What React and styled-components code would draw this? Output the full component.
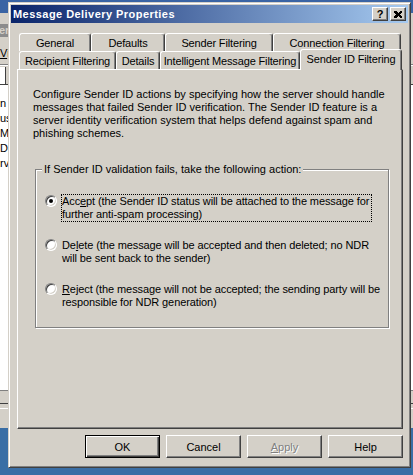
import React from 'react'
import styled, { createGlobalStyle } from 'styled-components'

const FACE = '#d4d0c8'
const SHADOW = '#808080'
const DARK = '#404040'
const FONT = `"Liberation Sans", Arial, sans-serif`

const Global = createGlobalStyle`
  html, body { margin:0; padding:0; background:#3a6ea5; overflow:hidden; }
  body { font-family:${FONT}; font-size:11px; color:#000; }
`

const Desktop = styled.div`
  position:relative;
  width:413px;
  height:475px;
  overflow:hidden;
  background:#3a6ea5;
`

/* window behind the dialog, only its edges show */
const BackWindow = styled.div`
  position:absolute;
  left:-6px;
  top:-6px;
  width:430px;
  height:434px;
  background:${FACE};
  display:flex;
  flex-direction:column;
`
const BackTitle = styled.div`
  height:19px;
  background:#3a64a4;
  flex:none;
`
const ChildTitle = styled.div`
  margin-top:11px;
  height:13px;
  width:20px;
  overflow:hidden;
  background:#8c8c8c;
  color:${FACE};
  font-weight:bold;
  line-height:13px;
  padding-left:5px;
  flex:none;
`
const BackMenu = styled.div`
  margin-top:5px;
  height:22px;
  line-height:22px;
  padding-left:6px;
  border-bottom:1px solid ${SHADOW};
  box-shadow:0 1px #fff;
  flex:none;
`
const BackToolbar = styled.div`
  height:17px;
  margin-top:2px;
  border-bottom:1px solid ${DARK};
  flex:none;
  display:flex;
  span{
    width:11px;
    border-right:1px solid ${DARK};
    background:#fff;
  }
`
const BackList = styled.div`
  flex:1;
  background:#fff;
  padding:11px 0 0 6px;
  div{
    width:14px;
    overflow:hidden;
    line-height:15px;
    white-space:nowrap;
  }
`
const BackStatus = styled.div`
  height:38px;
  flex:none;
  border-top:1px solid ${SHADOW};
  display:flex;
  flex-direction:column;
  gap:4px;
  padding-top:12px;
  box-sizing:border-box;
  span{ height:1px; background:${DARK}; }
  span + span{ background:#fff; }
`

const Dialog = styled.div`
  position:absolute;
  left:8px;
  top:2px;
  width:403px;
  height:466px;
  box-sizing:border-box;
  background:${FACE};
  border:1px solid;
  border-color:${FACE} ${DARK} ${DARK} ${FACE};
  box-shadow:inset 1px 1px #fff, inset -1px -1px ${SHADOW};
  padding:2px;
  display:flex;
  flex-direction:column;
`
const TitleBar = styled.div`
  height:18px;
  flex:none;
  display:flex;
  align-items:center;
  padding:0 2px;
  background:linear-gradient(to right, #0a246a, #a6caf0);
  color:#fff;
  font-weight:bold;
  letter-spacing:0.45px;
`
const CaptionButtons = styled.div`
  margin-left:auto;
  display:flex;
  gap:2px;
`
const CaptionButton = styled.div`
  width:16px;
  height:14px;
  box-sizing:border-box;
  background:${FACE};
  border:1px solid;
  border-color:#fff ${DARK} ${DARK} #fff;
  box-shadow:inset -1px -1px ${SHADOW};
  display:flex;
  align-items:center;
  justify-content:center;
  color:#000;
  font-weight:bold;
  font-size:11px;
  letter-spacing:0;
  line-height:12px;
`

const Body = styled.div`
  padding:10px 5px 0 6px;
  display:flex;
  flex-direction:column;
`
const TabRow = styled.div`
  display:flex;
  align-items:flex-start;
  margin-left:2px;
  height:18px;
`
const Tab = styled.div`
  box-sizing:border-box;
  width:${p => p.$w}px;
  height:${p => (p.$sel ? 21 : 18)}px;
  ${p => p.$sel && 'margin-top:-2px; margin-bottom:-1px; position:relative; z-index:1;'}
  background:${FACE};
  border-top:1px solid #fff;
  border-left:1px solid #fff;
  border-right:1px solid ${DARK};
  border-radius:3px 3px 0 0;
  box-shadow:inset -1px 0 ${SHADOW};
  text-align:center;
  padding-top:3px;
  line-height:13px;
  letter-spacing:-0.15px;
  white-space:nowrap;
`
const Panel = styled.div`
  box-sizing:border-box;
  height:360px;
  border:1px solid;
  border-color:#fff ${DARK} ${DARK} #fff;
  box-shadow:inset -1px -1px ${SHADOW};
  padding:18px 15px 0 15px;
`
const Intro = styled.p`
  margin:0;
  line-height:13px;
  white-space:nowrap;
`
const GroupBox = styled.fieldset`
  box-sizing:border-box;
  width:354px;
  min-width:0;
  margin:23px 0 0 2px;
  padding:0 0 17px 0;
  border:1px solid ${SHADOW};
  box-shadow:1px 1px 0 #fff, inset 1px 1px 0 #fff;
`
const Legend = styled.legend`
  margin-left:6px;
  padding:0 2px;
  line-height:13px;
  background:${FACE};
`
const Options = styled.div`
  margin-top:18px;
  display:flex;
  flex-direction:column;
  gap:16px;
`
const OptionRow = styled.div`
  display:flex;
  align-items:flex-start;
  padding-left:9px;
`
const Radio = styled.span`
  width:12px;
  height:12px;
  margin-top:1px;
  flex:none;
  box-sizing:border-box;
  border-radius:50%;
  border:1px solid;
  border-color:${SHADOW} #fff #fff ${SHADOW};
  box-shadow:inset 1px 1px ${DARK}, inset -1px -1px ${FACE};
  background:#fff;
  display:flex;
  align-items:center;
  justify-content:center;
  &::after{
    content:'';
    width:4px;
    height:4px;
    border-radius:50%;
    background:${p => (p.$on ? '#000' : 'transparent')};
  }
`
const OptionLabel = styled.span`
  margin-left:4px;
  border:1px dotted ${p => (p.$focus ? '#000' : 'transparent')};
  padding-right:2px;
  line-height:13px;
  letter-spacing:-0.1px;
  white-space:nowrap;
`

const ButtonRow = styled.div`
  margin-top:6px;
  display:flex;
  justify-content:flex-end;
  gap:6px;
`
const Button = styled.button`
  width:75px;
  height:23px;
  box-sizing:border-box;
  padding:0;
  background:${FACE};
  font-family:${FONT};
  font-size:11px;
  color:${p => (p.disabled ? SHADOW : '#000')};
  text-shadow:${p => (p.disabled ? '1px 1px #fff' : 'none')};
  border:1px solid;
  border-color:${p => (p.$default ? '#000' : `#fff ${DARK} ${DARK} #fff`)};
  box-shadow:${p =>
    p.$default
      ? `inset 1px 1px #fff, inset -1px -1px ${DARK}, inset -2px -2px ${SHADOW}`
      : `inset -1px -1px ${SHADOW}`};
`

const CloseGlyph = () => (
  <svg width="8" height="7" viewBox="0 0 8 7" shapeRendering="crispEdges">
    <path d="M0 0h2l2 2 2-2h2v1L6 3.5 8 6v1H6L4 5 2 7H0V6l2-2.5L0 1z" fill="#000" />
  </svg>
)

const backTabs = [
  { label: 'General', w: 72 },
  { label: 'Defaults', w: 74 },
  { label: 'Sender Filtering', w: 108 },
  { label: 'Connection Filtering', w: 128 },
]
const frontTabs = [
  { label: 'Recipient Filtering', w: 97 },
  { label: 'Details', w: 44 },
  { label: 'Intelligent Message Filtering', w: 140 },
  { label: 'Sender ID Filtering', w: 102, sel: true },
]

const options = [
  {
    key: 'accept',
    on: true,
    first: <>Acc<u>e</u>pt (the Sender ID status will be attached to the message for</>,
    second: 'further anti-spam processing)',
  },
  {
    key: 'delete',
    first: <>De<u>l</u>ete (the message will be accepted and then deleted; no NDR</>,
    second: 'will be sent back to the sender)',
  },
  {
    key: 'reject',
    first: <><u>R</u>eject (the message will not be accepted; the sending party will be</>,
    second: 'responsible for NDR generation)',
  },
]

export default function App() {
  return (
    <Desktop>
      <Global />
      <BackWindow>
        <BackTitle />
        <ChildTitle>ers</ChildTitle>
        <BackMenu><u>V</u>i</BackMenu>
        <BackToolbar><span /></BackToolbar>
        <BackList>
          <div>n (</div>
          <div>us</div>
          <div>Me</div>
          <div>Di</div>
          <div>rv</div>
        </BackList>
        <BackStatus><span /><span /></BackStatus>
      </BackWindow>

      <Dialog>
        <TitleBar>
          Message Delivery Properties
          <CaptionButtons>
            <CaptionButton>?</CaptionButton>
            <CaptionButton><CloseGlyph /></CaptionButton>
          </CaptionButtons>
        </TitleBar>
        <Body>
          <TabRow>
            {backTabs.map(t => (
              <Tab key={t.label} $w={t.w}>{t.label}</Tab>
            ))}
          </TabRow>
          <TabRow>
            {frontTabs.map(t => (
              <Tab key={t.label} $w={t.w} $sel={t.sel}>{t.label}</Tab>
            ))}
          </TabRow>
          <Panel>
            <Intro>
              Configure Sender ID actions by specifying how the server should handle<br />
              messages that failed Sender ID verification. The Sender ID feature is a<br />
              server identity verification system that helps defend against spam and<br />
              phishing schemes.
            </Intro>
            <GroupBox>
              <Legend>If Sender ID validation fails, take the following action:</Legend>
              <Options>
                {options.map(o => (
                  <OptionRow key={o.key}>
                    <Radio $on={o.on} />
                    <OptionLabel $focus={o.on}>
                      {o.first}<br />{o.second}
                    </OptionLabel>
                  </OptionRow>
                ))}
              </Options>
            </GroupBox>
          </Panel>
          <ButtonRow>
            <Button $default>OK</Button>
            <Button>Cancel</Button>
            <Button disabled><u>A</u>pply</Button>
            <Button>Help</Button>
          </ButtonRow>
        </Body>
      </Dialog>
    </Desktop>
  )
}
